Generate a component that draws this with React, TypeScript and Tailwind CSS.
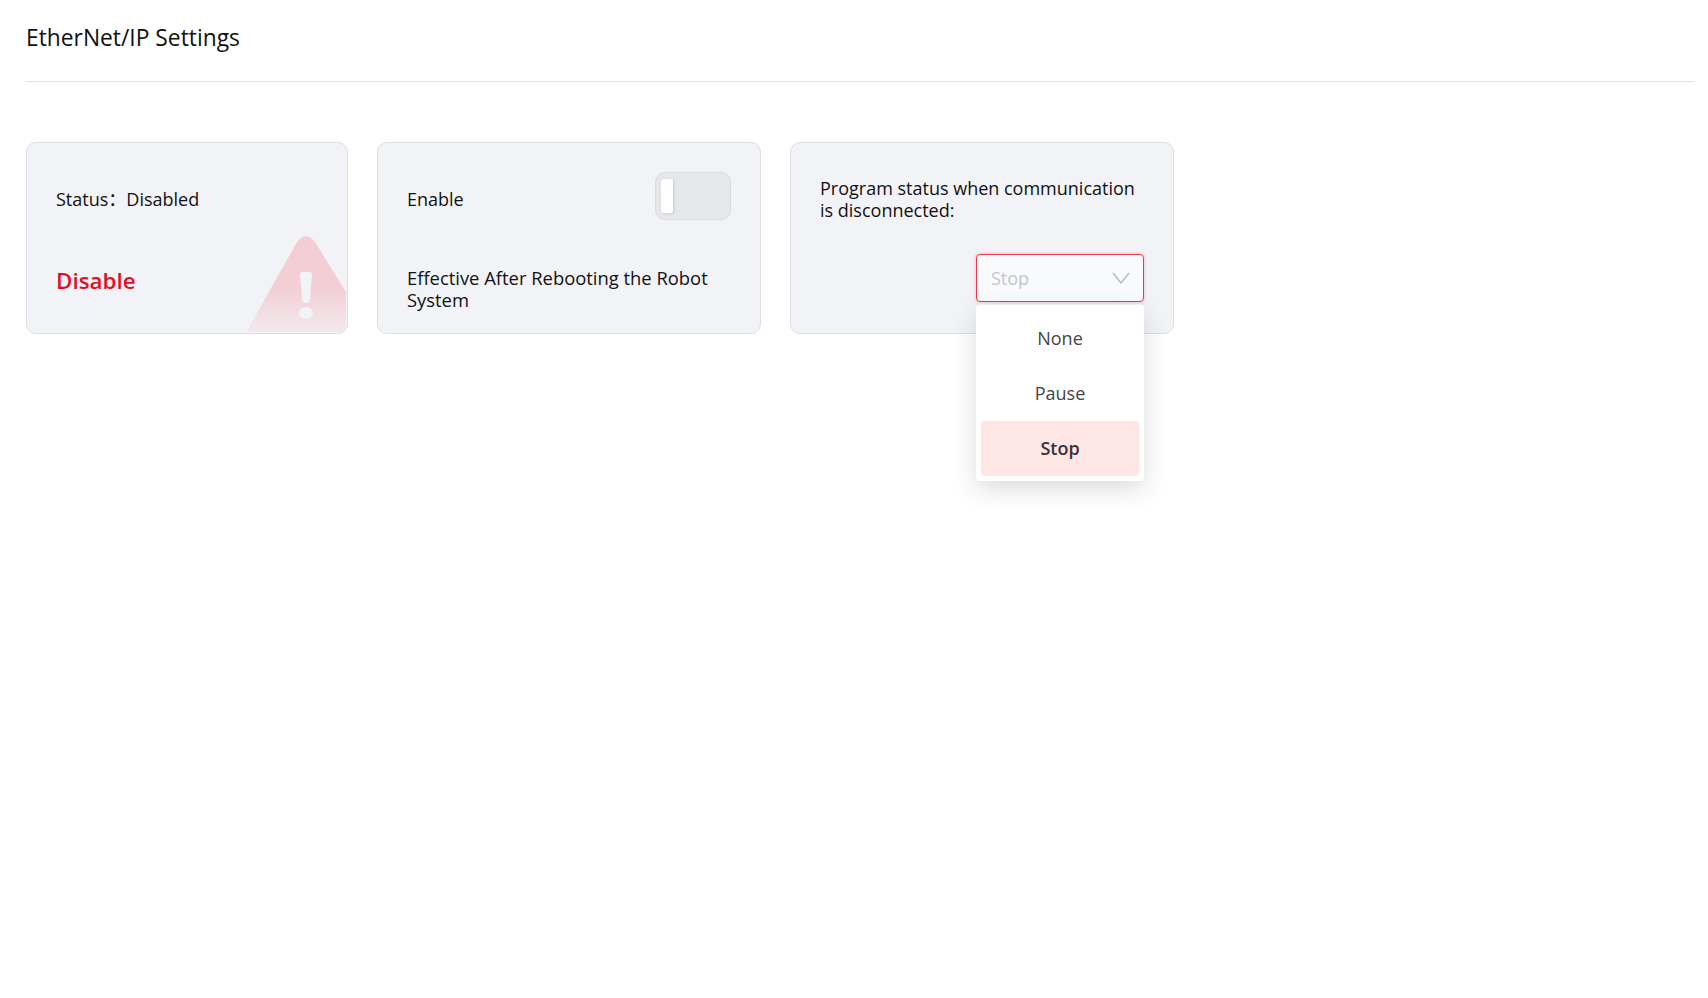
import React from "react";

const font = { fontFamily: '"Open Sans", "Noto Sans", "Noto Sans CJK SC", sans-serif' };

function Warning() {
  return (
    <svg className="absolute right-[1px] bottom-[1px]" width="100" height="98" viewBox="0 0 100 98" aria-hidden="true">
      <defs>
        <linearGradient id="warn" x1="0" y1="0" x2="0" y2="1">
          <stop offset="0" stopColor="#f3cdd3" />
          <stop offset="0.55" stopColor="#f3cfd6" />
          <stop offset="1" stopColor="#f2eaee" />
        </linearGradient>
      </defs>
      <path d="M2 98 L2 95 L51 8 Q60 -4 69 8 L100 58 L100 98 Z" fill="url(#warn)" />
      <path d="M54 41 Q54 38 57 38 L63 38 Q66 38 66 41 L63.5 68 Q60 70 56.5 68 Z" fill="#f2f3f7" />
      <ellipse cx="60" cy="79" rx="7" ry="6" fill="#f2f3f7" />
    </svg>
  );
}

export default function App() {
  return (
    <div className="min-h-[998px] bg-white pl-[26px] pr-[14px] text-[18px] leading-[22px] text-[#111]" style={font}>
      <div className="flex h-[82px] items-center border-b border-[#dfe1e6] pb-[5px] text-[22.8px]">EtherNet/IP Settings</div>
      <div className="mt-[60px] flex gap-[29px]">
        <div className="relative h-[192px] w-[322px] overflow-hidden rounded-[10px] border border-[#dcdee5] bg-[#f2f3f7] pl-[29px]">
          <div className="mt-[45px] flex items-center">Status：<span>Disabled</span></div>
          <div className="mt-[56px] text-[22.4px] font-semibold leading-[30px] text-[#e0111f]">Disable</div>
          <Warning />
        </div>
        <div className="flex h-[192px] w-[384px] flex-col rounded-[10px] border border-[#dcdee5] bg-[#f2f3f7] px-[29px]">
          <div className="mt-[29px] flex items-center justify-between">
            <span className="pt-[6px]">Enable</span>
            <div className="flex h-[48px] w-[76px] items-center rounded-[10px] border border-[#d9dbe1] bg-[#e6e7eb] pl-[5px]">
              <div className="h-[34px] w-[12px] rounded-[3px] bg-white shadow-[1px_1px_3px_rgba(0,0,0,0.12)]" />
            </div>
          </div>
          <div className="mt-[47px] text-[18.4px]">Effective After Rebooting the Robot System</div>
        </div>
        <div className="relative h-[192px] w-[384px] rounded-[10px] border border-[#dcdee5] bg-[#f2f3f7] px-[29px]">
          <div className="mt-[34px]">Program status when communication is disconnected:</div>
          <div className="absolute left-[185px] top-[111px] flex h-[48px] w-[168px] items-center justify-between rounded-[4px] border border-[#e8384a] bg-[#f9fafc] pl-[14px] pr-[13px] text-[#c3c5cb] shadow-[0_0_0_2px_rgba(232,56,74,0.1)]">
            <span>Stop</span>
            <svg width="18" height="12" viewBox="0 0 18 12" fill="none" stroke="#b9bbc2" strokeWidth="1.5"><path d="M1 1 L9 11 L17 1" /></svg>
          </div>
          <div className="absolute left-[185px] top-[162px] z-10 flex w-[168px] flex-col rounded-[4px] bg-white p-[5px] text-center text-[#444] shadow-[0_8px_24px_rgba(0,0,0,0.14)]">
            <div className="flex h-[55px] items-center justify-center">None</div>
            <div className="flex h-[55px] items-center justify-center">Pause</div>
            <div className="mt-[1px] flex h-[55px] items-center justify-center rounded-[4px] bg-[#fee6e5] pb-[2px] font-semibold text-[#333]">Stop</div>
          </div>
        </div>
      </div>
    </div>
  );
}
